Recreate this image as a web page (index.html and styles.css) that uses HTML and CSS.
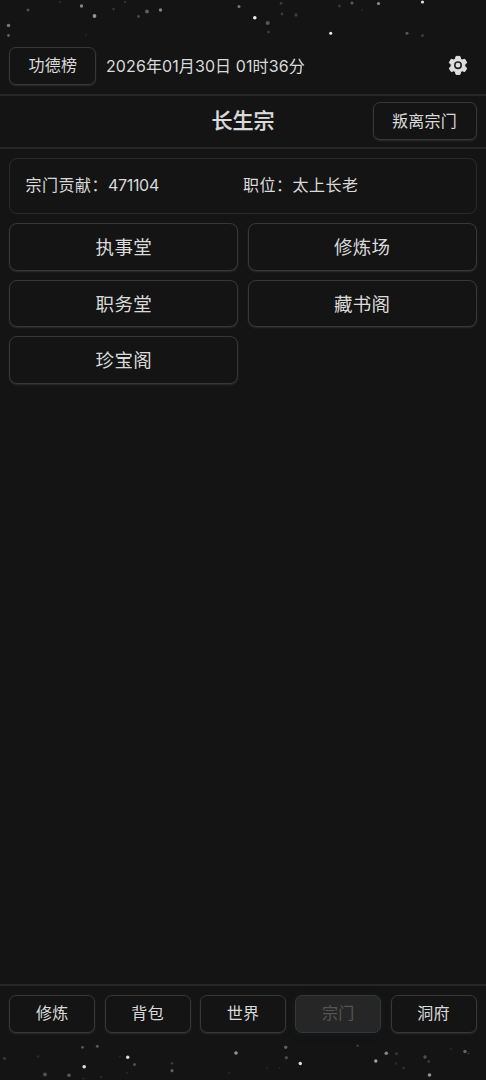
FILE: index.html
```html
<!DOCTYPE html>
<html lang="zh-CN">
<head>
<meta charset="utf-8">
<title>长生宗</title>
<link rel="stylesheet" href="styles.css">
</head>
<body>
<div class="app">
  <svg class="stars" viewBox="0 0 486 1080" aria-hidden="true">
    <g fill="#aaa">
      <circle cx="81.500" cy="6" r="1.700" opacity=".75"/><circle cx="94.500" cy="16" r="1.900" opacity=".85"/>
      <circle cx="28" cy="10" r="1.500" opacity=".4"/><circle cx="60" cy="2" r="1" opacity=".2"/>
      <circle cx="8.500" cy="25.500" r="1.800" opacity=".65"/><circle cx="8.500" cy="35.500" r="1.400" opacity=".5"/>
      <circle cx="113.500" cy="9" r="1.200" opacity=".25"/><circle cx="125" cy="2" r="1.200" opacity=".2"/>
      <circle cx="147" cy="11.500" r="1.900" opacity=".5"/><circle cx="138.500" cy="16.500" r="1.400" opacity=".35"/>
      <circle cx="160.500" cy="10" r="1.700" opacity=".75"/><circle cx="86" cy="35" r="1" opacity=".12"/>
      <circle cx="239" cy="6.500" r="1.500" opacity=".65"/><circle cx="254.800" cy="17.800" r="1.800" fill="#eee"/>
      <circle cx="267.700" cy="23" r="2" opacity=".45"/><circle cx="281" cy="3.500" r="1.400" opacity=".25"/>
      <circle cx="282" cy="14" r="1.400" opacity=".25"/><circle cx="296" cy="15" r="1.700" opacity=".25"/>
      <circle cx="268.500" cy="32" r="1.500" opacity=".25"/><circle cx="330.700" cy="33.300" r="1.500" fill="#eee"/>
      <circle cx="339.500" cy="6" r="1.400" opacity=".25"/><circle cx="352" cy="3" r="1.600" opacity=".45"/>
      <circle cx="378.500" cy="3.500" r="1.600" opacity=".8"/><circle cx="362" cy="10" r="1" opacity=".15"/>
      <circle cx="422.500" cy="2" r="1.600" fill="#ddd"/><circle cx="407" cy="33.300" r="1.500" opacity=".45"/>
      <circle cx="422.500" cy="35.500" r="1.500" opacity=".25"/>
      <circle cx="82.500" cy="1047.300" r="1.400" opacity=".45"/><circle cx="97.300" cy="1046.300" r="1.500" opacity=".45"/>
      <circle cx="4.500" cy="1058.500" r="1.800" opacity=".2"/><circle cx="38" cy="1056.500" r="1.300" opacity=".15"/>
      <circle cx="84.200" cy="1066.700" r="1.800" fill="#ddd"/><circle cx="45" cy="1074.500" r="2" opacity=".4"/>
      <circle cx="69" cy="1075.300" r="1.800" opacity=".45"/><circle cx="83.500" cy="1078.500" r="1" opacity=".15"/>
      <circle cx="101" cy="1077" r="1.200" opacity=".15"/><circle cx="127.700" cy="1057.300" r="1.700" fill="#ddd"/>
      <circle cx="120" cy="1056.500" r="1" opacity=".15"/><circle cx="134.500" cy="1064.500" r="1.500" opacity=".4"/>
      <circle cx="127" cy="1073" r="1" opacity=".15"/><circle cx="172" cy="1063.300" r="1.300" opacity=".25"/>
      <circle cx="172" cy="1070.700" r="1.600" opacity=".5"/><circle cx="236" cy="1053" r="1.800" opacity=".85"/>
      <circle cx="229" cy="1073" r="1" opacity=".15"/><circle cx="285.700" cy="1047.200" r="1.700" opacity=".5"/>
      <circle cx="286.300" cy="1057.700" r="1.700" opacity=".35"/><circle cx="300.300" cy="1063.500" r="1.700" fill="#ddd"/>
      <circle cx="267" cy="1068" r="1" opacity=".12"/><circle cx="279.500" cy="1068" r="1" opacity=".12"/>
      <circle cx="357.700" cy="1045.700" r="1.300" opacity=".25"/><circle cx="386.300" cy="1053.200" r="1.800" opacity=".75"/>
      <circle cx="375.800" cy="1061" r="1.700" opacity=".95"/><circle cx="396.500" cy="1053.700" r="1.600" opacity=".2"/>
      <circle cx="396" cy="1063.500" r="1.200" opacity=".15"/><circle cx="403.500" cy="1068" r="1.300" opacity=".2"/>
      <circle cx="425" cy="1057" r="1.700" opacity=".4"/><circle cx="428.700" cy="1061.500" r="1.300" opacity=".3"/>
      <circle cx="429.500" cy="1075" r="1.800" opacity=".85"/><circle cx="451" cy="1049" r="1" opacity=".15"/>
      <circle cx="465" cy="1051.500" r="1.700" opacity=".55"/><circle cx="468.500" cy="1053.500" r="1" opacity=".25"/>
    </g>
  </svg>
  <header class="topbar">
    <button class="btn btn-rank">功德榜</button>
    <span class="clock">2026年01月30日 01时36分</span>
    <svg class="gear" viewBox="0 0 20 20" aria-label="设置">
      <path fill="#dedede" stroke="#dedede" stroke-width="1" stroke-linejoin="round" d="M8 1.400h4l.6 2.700 1.600.9 2.600-.8 2 3.500-2 1.800v1.800l2 1.900-2 3.400-2.600-.8-1.600.9-.6 2.700H8l-.6-2.700-1.600-.9-2.600.8-2-3.400 2-1.900V9.500l-2-1.800 2-3.500 2.600.8 1.600-.9z"/>
      <circle cx="10" cy="10.200" r="3.200" fill="#dedede" stroke="#222" stroke-width="1.600"/>
    </svg>
  </header>
  <div class="titlebar">
    <h1 class="title">长生宗</h1>
    <button class="btn btn-leave">叛离宗门</button>
  </div>
  <main class="content">
    <section class="info">
      <span>宗门贡献：<span class="amount">471104</span></span>
      <span>职位：太上长老</span>
    </section>
    <div class="halls">
      <button class="btn hall">执事堂</button>
      <button class="btn hall">修炼场</button>
      <button class="btn hall">职务堂</button>
      <button class="btn hall">藏书阁</button>
      <button class="btn hall">珍宝阁</button>
    </div>
  </main>
  <nav class="tabs">
    <button class="btn">修炼</button>
    <button class="btn">背包</button>
    <button class="btn">世界</button>
    <button class="btn active">宗门</button>
    <button class="btn">洞府</button>
  </nav>
</div>
</body>
</html>
```
FILE: styles.css
```css
* { box-sizing: border-box; }
body {
  margin: 0;
  background: #141414;
  color: #dadada;
  font-family: Inter, "Noto Sans CJK SC", sans-serif;
  font-size: 16px;
}
.app {
  position: relative;
  display: flex;
  flex-direction: column;
  height: 1080px;
  padding: 38px 0;
}
.stars {
  position: absolute;
  inset: 0;
  width: 486px;
  height: 1080px;
  pointer-events: none;
  filter: blur(.4px);
}
.btn {
  height: 38px;
  padding: 0 0 4px;
  border: 1px solid #373737;
  border-radius: 7px;
  background: #141414;
  box-shadow: 0 1px 2px #2c2c2c;
  color: #dadada;
  font: inherit;
  letter-spacing: .3px;
  white-space: nowrap;
}
.topbar {
  display: flex;
  align-items: center;
  height: 58px;
  padding: 0 18px 0 9.400px;
  border-bottom: 2px solid #272727;
}
.btn-rank { width: 87px; }
.clock {
  margin-left: 9.600px;
  padding-bottom: 3px;
  letter-spacing: .1px;
  white-space: nowrap;
}
.gear {
  width: 20px;
  height: 20px;
  margin: 0 0 2px auto;
}
.titlebar {
  display: grid;
  grid-template-columns: 1fr auto 1fr;
  align-items: center;
  height: 53px;
  padding: 0 9.500px 1px;
  border-bottom: 2px solid #272727;
}
.title {
  grid-column: 2;
  margin: 0;
  font-size: 21px;
  font-weight: 500;
  line-height: 30px;
  -webkit-text-stroke: .25px currentColor;
}
.btn-leave {
  justify-self: end;
  width: 104px;
  padding-bottom: 2px;
}
.content {
  flex: 1;
  padding: 9px 9.500px 0 9.400px;
}
.info {
  display: grid;
  grid-template-columns: 1fr 1fr;
  align-items: center;
  height: 56px;
  margin-bottom: 9px;
  padding: 0 15px 4px;
  border: 1px solid #2a2a2a;
  border-radius: 8px;
  letter-spacing: .5px;
}
.amount { letter-spacing: -.3px; }
.halls {
  display: grid;
  grid-template-columns: 1fr 1fr;
  gap: 9px 9.500px;
}
.hall {
  height: 47.700px;
  padding-bottom: 2px;
  border-radius: 8px;
  font-size: 18.500px;
}
.tabs {
  display: grid;
  grid-template-columns: repeat(5, 1fr);
  gap: 9.400px;
  height: 58px;
  padding: 9px 9.500px 0 9.400px;
  border-top: 2px solid #272727;
}
.tabs .active {
  background: #262626;
  color: #555;
  box-shadow: 0 1px 7px #151b20;
}
```
